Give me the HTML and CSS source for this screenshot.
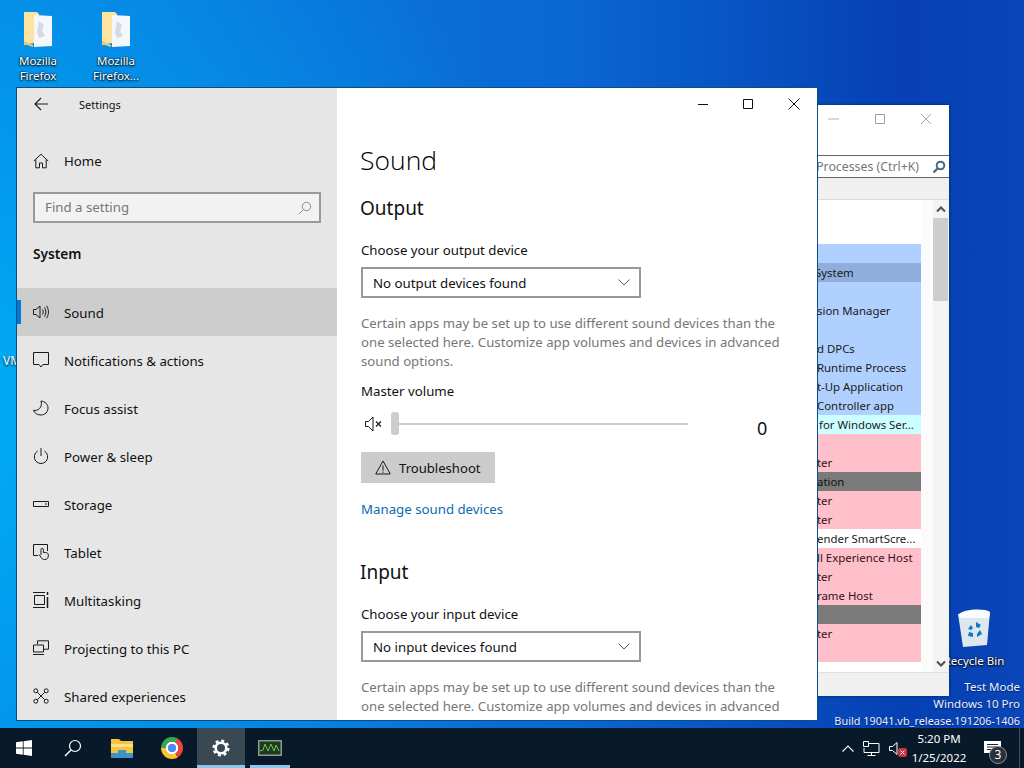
FILE: index.html
```html
<!DOCTYPE html>
<html lang="en">
<head>
<meta charset="utf-8">
<title>Settings - Sound</title>
<link rel="stylesheet" href="styles.css">
</head>
<body>
<div class="desktop">
  <div class="desk-icon folder-one">
    <svg width="32" height="38" viewBox="0 0 32 38"><path d="M2 2h13l2 2v28L2 35z" fill="#fde3a0"/><path d="M2 31l9 4v2l-9-3z" fill="#ecc873"/><path d="M12 5l18 1v30l-18 1z" fill="#f4f7fb"/><path d="M17 11l5 4-2 6 3 5-6 2-2-6z" fill="#d5dbe2"/></svg>
    <span>Mozilla<br>Firefox</span>
  </div>
  <div class="desk-icon folder-two">
    <svg width="32" height="38" viewBox="0 0 32 38"><path d="M2 2h13l2 2v28L2 35z" fill="#fde3a0"/><path d="M2 31l9 4v2l-9-3z" fill="#ecc873"/><path d="M12 5l18 1v30l-18 1z" fill="#f4f7fb"/><path d="M17 11l5 4-2 6 3 5-6 2-2-6z" fill="#d5dbe2"/></svg>
    <span>Mozilla<br>Firefox...</span>
  </div>
  <span class="desk-vm">VM</span>
  <div class="desk-icon recycle">
    <svg width="38" height="40" viewBox="0 0 38 40"><path d="M3 6l32-2-3 33-24 2z" fill="#dfe7ee"/><path d="M3 7c5-6 26-7 32-3l-1 6H5z" fill="#fafcfe"/><path d="M21 14l5 3-2 3-3-1zM13 21l3-4 2 3-2 2zM18 29l-5-1 1-4 4 1zM25 22l2 4-5 3v-3z" fill="#1178c8"/></svg>
    <span>Recycle Bin</span>
  </div>
  <div class="watermark">
    <span>Test Mode</span>
    <span>Windows 10 Pro</span>
    <span class="wm-build">Build 19041.vb_release.191206-1406</span>
  </div>

  <section class="tm">
    <div class="tm-title">
      <svg width="12" height="12" viewBox="0 0 12 12"><path d="M0 6h11" stroke="#b4b4b4"/></svg>
      <svg width="12" height="12" viewBox="0 0 12 12"><path d="M1.500 1.500h9v9h-9z" fill="none" stroke="#a0a0a0"/></svg>
      <svg width="12" height="12" viewBox="0 0 12 12"><path d="M1 1l10 10M11 1L1 11" stroke="#a8a8a8"/></svg>
    </div>
    <div class="tm-search">
      <span>Search Processes (Ctrl+K)</span>
      <svg width="14" height="14" viewBox="0 0 14 14"><circle cx="8.500" cy="5.500" r="3.800" fill="none" stroke="#4d6b88" stroke-width="2"/><path d="M6 8l-4.500 4.500" stroke="#4d6b88" stroke-width="2.400"/></svg>
    </div>
    <div class="tm-toolbar"></div>
    <div class="tm-body">
      <div class="tm-list">
        <div class="tm-blank"></div>
        <div class="row blue"></div>
        <div class="row blue-dark sys">System</div>
        <div class="row blue"></div>
        <div class="row blue">sion Manager</div>
        <div class="row blue"></div>
        <div class="row blue">d DPCs</div>
        <div class="row blue">Runtime Process</div>
        <div class="row blue">t-Up Application</div>
        <div class="row blue">Controller app</div>
        <div class="row cyan">for Windows Ser...</div>
        <div class="row pink"></div>
        <div class="row pink">ter</div>
        <div class="row grey">ation</div>
        <div class="row pink">ter</div>
        <div class="row pink">ter</div>
        <div class="row plain">ender SmartScre...</div>
        <div class="row pink">ll Experience Host</div>
        <div class="row pink">ter</div>
        <div class="row pink">rame Host</div>
        <div class="row grey"></div>
        <div class="row pink">ter</div>
        <div class="row pink"></div>
      </div>
      <div class="tm-scroll">
        <svg class="tm-arrow" width="10" height="7" viewBox="0 0 10 7"><path d="M1 5.500l4-4 4 4" fill="none" stroke="#505050" stroke-width="2"/></svg>
        <div class="tm-thumb"></div>
        <svg class="tm-arrow tm-arrow-down" width="10" height="7" viewBox="0 0 10 7"><path d="M1 1.500l4 4 4-4" fill="none" stroke="#505050" stroke-width="2"/></svg>
      </div>
    </div>
    <div class="tm-status"></div>
  </section>

  <section class="settings">
    <aside class="side">
      <div class="side-head">
        <svg class="back" width="16" height="16" viewBox="0 0 16 16"><path d="M15 8H2M8 2L2 8l6 6" fill="none" stroke="#1a1a1a" stroke-width="1.100"/></svg>
        <span>Settings</span>
      </div>
      <div class="nav-item home">
        <svg width="16" height="16" viewBox="0 0 16 16"><path d="M.8 8L8 1.200 15.200 8M2.800 6.500v8.300h3.700V10h3v4.800h3.700V6.500" fill="none" stroke="#1a1a1a"/></svg>
        <span>Home</span>
      </div>
      <div class="find">
        <span>Find a setting</span>
        <svg width="14" height="14" viewBox="0 0 14 14"><circle cx="8.500" cy="5.500" r="4.200" fill="none" stroke="#8a8a8a"/><path d="M5.500 8.500L1 13" stroke="#8a8a8a"/></svg>
      </div>
      <h2 class="side-title">System</h2>
      <nav class="nav">
        <div class="nav-item active">
          <svg width="16" height="16" viewBox="0 0 16 16"><path d="M.5 5.500h2.500L7 2v12L3 10.500H.5zM9.500 5.500c1 1.500 1 3.500 0 5M11.500 3.500c1.800 2.700 1.800 6.300 0 9M13.500 1.800c2.600 3.800 2.600 8.600 0 12.400" fill="none" stroke="#1a1a1a"/></svg>
          <span>Sound</span>
        </div>
        <div class="nav-item">
          <svg width="16" height="16" viewBox="0 0 16 16"><path d="M.5 .5h15v12H10l-2 2.500-2-2.500H.5z" fill="none" stroke="#1a1a1a"/></svg>
          <span>Notifications &amp; actions</span>
        </div>
        <div class="nav-item">
          <svg width="16" height="16" viewBox="0 0 16 16"><path d="M8 1c4 .5 7 3.200 7 7 0 4-3 7-7 7-3.500 0-6.500-1.800-7.500-4.700C4.500 11.500 10 7.500 8 1z" fill="none" stroke="#1a1a1a"/></svg>
          <span>Focus assist</span>
        </div>
        <div class="nav-item">
          <svg width="16" height="16" viewBox="0 0 16 16"><path d="M4.700 3a6.700 6.700 0 1 0 6.600 0M8 0v8" fill="none" stroke="#1a1a1a"/></svg>
          <span>Power &amp; sleep</span>
        </div>
        <div class="nav-item">
          <svg width="16" height="16" viewBox="0 0 16 16"><path d="M.5 5.500h15v5H.5z" fill="none" stroke="#1a1a1a"/><path d="M12 8h2" stroke="#1a1a1a"/></svg>
          <span>Storage</span>
        </div>
        <div class="nav-item">
          <svg width="16" height="16" viewBox="0 0 16 16"><path d="M5 11.500H.5V.5h14v6.500" fill="none" stroke="#1a1a1a"/><path d="M8 11V5.500a1.200 1.200 0 0 1 2.400 0V8.500h2c1.800 0 3 1 3 2.800 0 2.800-1.500 4.200-3.700 4.200-2 0-3-.8-3.700-2.200L6 10.500" fill="none" stroke="#1a1a1a"/></svg>
          <span>Tablet</span>
        </div>
        <div class="nav-item">
          <svg width="16" height="16" viewBox="0 0 16 16"><path d="M0 .5h12M0 15.500h12M1.500 3.500h10v9h-10z" fill="none" stroke="#1a1a1a"/><path d="M14.500 0v3M14.500 5v11" stroke="#1a1a1a" stroke-width="1.500"/></svg>
          <span>Multitasking</span>
        </div>
        <div class="nav-item">
          <svg width="16" height="16" viewBox="0 0 16 16"><path d="M4.500 4V.8h11v8.400H11M.5 5h10v7H.5zM0 14.500h11" fill="none" stroke="#1a1a1a"/></svg>
          <span>Projecting to this PC</span>
        </div>
        <div class="nav-item">
          <svg width="16" height="16" viewBox="0 0 16 16"><circle cx="2.800" cy="2.800" r="2" fill="none" stroke="#1a1a1a"/><circle cx="13.200" cy="2.800" r="2" fill="none" stroke="#1a1a1a"/><circle cx="2.800" cy="13.200" r="2" fill="none" stroke="#1a1a1a"/><circle cx="13.200" cy="13.200" r="2" fill="none" stroke="#1a1a1a"/><path d="M4.300 4.300l7.400 7.400M11.700 4.300l-7.400 7.400" stroke="#1a1a1a"/></svg>
          <span>Shared experiences</span>
        </div>
      </nav>
    </aside>
    <main class="main">
      <h1>Sound</h1>
      <h3 class="section-title">Output</h3>
      <p class="label">Choose your output device</p>
      <div class="select"><span>No output devices found</span>
        <svg width="12" height="7" viewBox="0 0 12 7"><path d="M.5 .5L6 6l5.500-5.500" fill="none" stroke="#5a5a5a"/></svg>
      </div>
      <p class="hint">Certain apps may be set up to use different sound devices than the one selected here. Customize app volumes and devices in advanced sound options.</p>
      <p class="label label-volume">Master volume</p>
      <div class="volume">
        <svg width="19" height="16" viewBox="0 0 19 16"><path d="M.5 5.500h3L8 1v14l-4.500-4.500h-3z" fill="none" stroke="#1a1a1a"/><path d="M11 5.500l5 5M16 5.500l-5 5" stroke="#1a1a1a" stroke-width="1.200"/></svg>
        <div class="slider"><i class="slider-thumb"></i><i class="slider-track"></i></div>
        <span class="volume-value">0</span>
      </div>
      <button class="troubleshoot" type="button">
        <svg width="16" height="15" viewBox="0 0 16 15"><path d="M8 1l7.300 13H.7z" fill="none" stroke="#1a1a1a"/><path d="M8 5.500v5M8 11.500v1.300" stroke="#1a1a1a"/></svg>
        <span>Troubleshoot</span>
      </button>
      <a class="link" href="#">Manage sound devices</a>
      <h3 class="section-title input-title">Input</h3>
      <p class="label">Choose your input device</p>
      <div class="select"><span>No input devices found</span>
        <svg width="12" height="7" viewBox="0 0 12 7"><path d="M.5 .5L6 6l5.500-5.500" fill="none" stroke="#5a5a5a"/></svg>
      </div>
      <p class="hint">Certain apps may be set up to use different sound devices than the one selected here. Customize app volumes and devices in advanced sound options.</p>
    </main>
    <div class="caption">
      <svg width="10" height="10" viewBox="0 0 10 10"><path d="M0 5.500h10" stroke="#111"/></svg>
      <svg width="10" height="10" viewBox="0 0 10 10"><path d="M.5 .5h9v9h-9z" fill="none" stroke="#111"/></svg>
      <svg width="12" height="12" viewBox="0 0 12 12"><path d="M.5 .5l11 11M11.500 .5l-11 11" stroke="#111"/></svg>
    </div>
  </section>

  <footer class="taskbar">
    <div class="task start">
      <svg width="16" height="16" viewBox="0 0 16 16"><path d="M0 2.300l6.800-1v6.300H0zM7.600 1.200L16 0v7.600H7.600zM0 8.400h6.800v6.300l-6.800-1zM7.600 8.400H16V16l-8.400-1.200z" fill="#fff"/></svg>
    </div>
    <div class="task task-search">
      <svg width="18" height="18" viewBox="0 0 18 18"><circle cx="11" cy="7" r="5.500" fill="none" stroke="#fff" stroke-width="1.200"/><path d="M7 11l-6 6" stroke="#fff" stroke-width="1.400"/></svg>
    </div>
    <div class="task">
      <svg width="22" height="20" viewBox="0 0 22 20"><path d="M0 1h8l2 2h12v17H0z" fill="#f5c542"/><path d="M0 6h22v3H0z" fill="#fde08a"/><path d="M0 15h7v-3h8v3h7v5H0z" fill="#3f93c9"/></svg>
    </div>
    <div class="task">
      <i class="chrome"></i>
    </div>
    <div class="task task-on">
      <svg width="18" height="18" viewBox="0 0 18 18"><circle cx="9" cy="9" r="5.300" fill="none" stroke="#fff" stroke-width="2.600"/><circle cx="9" cy="9" r="7.400" fill="none" stroke="#fff" stroke-width="2.400" stroke-dasharray="3 2.810"/></svg>
    </div>
    <div class="task task-run">
      <svg width="24" height="16" viewBox="0 0 24 16"><path d="M0 0h24v16H0z" fill="#8f9c92"/><path d="M1.500 1.500h21v13h-21z" fill="#1d3a1f"/><path d="M2 11l3-1 2-6 3 7 3-7 3 7 2-6 3 6" fill="none" stroke="#6fc24a"/></svg>
    </div>
    <div class="tray">
      <svg class="tray-up" width="12" height="7" viewBox="0 0 12 7"><path d="M.5 6.500L6 1l5.500 5.500" fill="none" stroke="#fff" stroke-width="1.100"/></svg>
      <svg width="17" height="15" viewBox="0 0 17 15"><path d="M5 2.500h11v9H1V7M8.500 11.500v3M4.500 14.500h8" fill="none" stroke="#fff"/><path d="M.5 .5h5v5h-5z" fill="none" stroke="#fff"/></svg>
      <svg class="tray-sound" width="19" height="16" viewBox="0 0 19 16"><path d="M.5 4.500h3L8 .5v12l-4.500-4h-3z" fill="none" stroke="#fff"/><rect x="9" y="6" width="9" height="9" rx="2" fill="#c9323a"/><path d="M11.500 8.500l4 4M15.500 8.500l-4 4" stroke="#fff"/></svg>
      <div class="clock"><span>5:20 PM</span><span>1/25/2022</span></div>
      <div class="notify">
        <svg width="17" height="15" viewBox="0 0 17 15"><path d="M0 0h17v12H11l-3 3v-3H0z" fill="#fff"/><path d="M3 3.500h11M3 6h11M3 8.500h7" stroke="#1a2630"/></svg>
        <b class="badge">3</b>
      </div>
      <i class="show-desktop"></i>
    </div>
  </footer>
</div>
</body>
</html>
```
FILE: styles.css
```css
* { box-sizing: border-box; }
html, body { margin: 0; padding: 0; }
body {
  font-family: "Noto Sans", "Open Sans", sans-serif;
  color: #111;
  overflow: hidden;
}
.desktop {
  position: relative;
  width: 1024px;
  height: 768px;
  overflow: hidden;
  background:
    radial-gradient(ellipse 620px 700px at -60px 420px, #00aef5 0%, rgba(0,160,240,.85) 35%, rgba(0,120,225,0) 100%),
    linear-gradient(90deg, #0a7fe0 0%, #0a68d4 55%, #0640b4 88%, #0a46b8 100%);
}

/* desktop items */
.desk-icon {
  position: absolute;
  display: flex;
  flex-direction: column;
  align-items: center;
  color: #fff;
  font-size: 11.500px;
  line-height: 15px;
  text-align: center;
  text-shadow: 0 1px 2px #000, 0 0 2px #000;
}
.folder-one { left: 7px; top: 10px; width: 62px; }
.folder-two { left: 85px; top: 10px; width: 62px; }
.desk-icon span { margin-top: 5px; }
.recycle { left: 935px; top: 608px; width: 78px; }
.recycle span { margin-top: 5px; }
.desk-vm {
  position: absolute;
  left: 3px;
  top: 353px;
  color: #fff;
  font-size: 12px;
  line-height: 16px;
  text-shadow: 0 1px 2px #000;
}
.watermark {
  position: absolute;
  right: 4px;
  top: 678px;
  display: flex;
  flex-direction: column;
  align-items: flex-end;
  color: #e9f2ff;
  font-size: 11.500px;
  line-height: 17px;
  text-shadow: 0 1px 1px rgba(0,0,40,.6);
}
.wm-build { font-size: 10.900px; }

/* background process window */
.tm {
  position: absolute;
  left: 760px;
  top: 105px;
  width: 189px;
  height: 591px;
  display: flex;
  flex-direction: column;
  background: #fff;
  box-shadow: 0 0 3px rgba(0,0,0,.5);
  font-size: 11.400px;
}
.tm-title {
  height: 50px;
  padding: 8px 17px 0 0;
  display: flex;
  justify-content: flex-end;
  gap: 34px;
}
.tm-search {
  height: 23px;
  border: 1px solid #5a6670;
  border-right: 0;
  display: flex;
  align-items: center;
  justify-content: flex-end;
  gap: 13px;
  padding-right: 3px;
  color: #777;
  font-size: 12.300px;
  white-space: nowrap;
}
.tm-toolbar { height: 22px; background: #f0f0f0; border-bottom: 1px solid #dcdcdc; }
.tm-body { flex: 1; display: flex; min-height: 0; }
.tm-list { flex: 1; overflow: hidden; line-height: 19px; }
.tm-blank { height: 44px; background: #fff; }
.row { height: 19px; padding-left: 57px; white-space: nowrap; color: #1a1a1a; overflow: hidden; }
.sys { padding-left: 55px; }
.blue { background: #b0d0ff; }
.blue-dark { background: #90aedc; }
.cyan { background: #ccffff; padding-left: 59px; }
.pink { background: #ffc0cb; color: #33101a; }
.grey { background: #7a7a7a; color: #111; }
.plain { background: #fff; }
.tm-scroll {
  position: relative;
  width: 28px;
  flex: none;
  background: #f3f3f3;
  border-left: 12px solid #fbfbfb;
}
.tm-arrow { position: absolute; left: 3px; top: 6px; }
.tm-arrow-down { top: auto; bottom: 5px; }
.tm-thumb { position: absolute; left: 0; top: 18px; width: 15px; height: 83px; background: #cdcdcd; }
.tm-status { height: 24px; background: #f0f0f0; border-top: 1px solid #e0e0e0; }

/* settings window */
.settings {
  position: absolute;
  left: 16px;
  top: 87px;
  width: 802px;
  height: 634px;
  display: flex;
  border: 1px solid #0b4f80;
  background: #fff;
  overflow: hidden;
}
.side {
  width: 320px;
  flex: none;
  background: #e6e6e6;
  font-size: 13.250px;
}
.side-head {
  height: 32px;
  display: flex;
  align-items: center;
  font-size: 11px;
  padding-left: 16px;
}
.side-head .back { margin-right: 30px; }
.nav-item {
  position: relative;
  height: 48px;
  display: flex;
  align-items: center;
  gap: 15px;
  padding-left: 16px;
  white-space: nowrap;
}
.nav .nav-item span { padding-top: 2px; }
.home { margin-top: 17px; }
.find {
  margin: 7px 16px 0;
  height: 31px;
  border: 2px solid #999;
  background: #f2f2f2;
  display: flex;
  align-items: center;
  justify-content: space-between;
  padding: 0 7px 0 10px;
  color: #777;
}
.find span { padding-bottom: 2px; }
.side-title {
  margin: 21px 0 0 16px;
  font-size: 13.700px;
  line-height: 20px;
  font-weight: 600;
}
.nav { margin-top: 24px; }
.active { background: #cdcdcd; }
.active::before {
  content: "";
  position: absolute;
  left: 0;
  top: 12px;
  width: 4px;
  height: 24px;
  background: #0078d7;
}
.main {
  flex: 1;
  padding: 0 23px;
  min-width: 0;
}
h1 {
  margin: 53px 0 0;
  font-size: 26.500px;
  line-height: 38px;
  font-weight: 300;
  color: #000;
  font-family: "Open Sans", "Noto Sans", sans-serif;
}
.section-title {
  margin: 16px 0 0;
  font-size: 19px;
  line-height: 26px;
  font-weight: 400;
}
.label {
  margin: 19px 0 0 1px;
  font-size: 13.250px;
  line-height: 20px;
}
.select {
  margin: 7px 0 0 1px;
  width: 280px;
  height: 31px;
  border: 2px solid #999;
  display: flex;
  align-items: center;
  justify-content: space-between;
  padding: 0 9px 0 10px;
  font-size: 13.250px;
}
.hint {
  margin: 16px 0 0 1px;
  width: 430px;
  color: #767676;
  font-size: 13.200px;
  line-height: 19px;
}
.label-volume { margin-top: 10px; }
.volume {
  margin: 11px 0 0 5px;
  height: 23px;
  display: flex;
  align-items: center;
}
.slider {
  margin-left: 7px;
  width: 297px;
  display: flex;
  align-items: center;
}
.slider-thumb { width: 8px; height: 23px; border-radius: 3px; background: #ccc; flex: none; }
.slider-track { flex: 1; height: 2px; background: #ccc; }
.volume-value { margin: 8px 0 0 69px; font-size: 18px; }
.troubleshoot {
  margin: 17px 0 0 1px;
  width: 134px;
  height: 31px;
  border: 0;
  padding: 0 0 0 14px;
  background: #ccc;
  display: flex;
  align-items: center;
  gap: 8px;
  color: #111;
  font: inherit;
  font-size: 13.100px;
}
.link {
  display: block;
  margin: 16px 0 0 1px;
  color: #0a6cb0;
  text-decoration: none;
  font-size: 13.250px;
  line-height: 20px;
}
.input-title { margin-top: 40px; }
.caption {
  position: absolute;
  right: 17px;
  top: 10px;
  display: flex;
  align-items: center;
  gap: 35px;
}

/* taskbar */
.taskbar {
  position: absolute;
  left: 0;
  right: 0;
  bottom: 0;
  height: 40px;
  background: #08192a;
  display: flex;
}
.task {
  position: relative;
  width: 50px;
  display: flex;
  align-items: center;
  justify-content: center;
}
.start { width: 48px; }
.task-search { width: 49px; }
.task-on { width: 48px; background: #3a4853; }
.task-on::after, .task-run::after {
  content: "";
  position: absolute;
  left: 0;
  right: 0;
  bottom: 0;
  height: 3px;
  background: #8cc6ee;
}
.task-run { margin-left: 5px; width: 40px; }
.chrome {
  width: 22px;
  height: 22px;
  border-radius: 50%;
  background:
    radial-gradient(circle, #4a8cf0 0 4px, #fff 4.500px 6px, transparent 6.500px),
    conic-gradient(from 30deg, #e8483a 0 120deg, #f7c52d 120deg 240deg, #3aa655 240deg 360deg);
}
.tray {
  margin-left: auto;
  display: flex;
  align-items: center;
  color: #fff;
}
.tray-up { margin-right: 9px; }
.tray-sound { margin-left: 9px; margin-top: 3px; }
.clock {
  width: 62px;
  display: flex;
  flex-direction: column;
  align-items: center;
  font-size: 11.500px;
  line-height: 19px;
  white-space: nowrap;
}
.notify {
  position: relative;
  width: 49px;
  display: flex;
  justify-content: center;
  padding-right: 5px;
}
.badge {
  position: absolute;
  left: 19px;
  top: 5px;
  width: 18px;
  height: 18px;
  border-radius: 50%;
  border: 1px solid #8a8f94;
  background: #2a3038;
  font-size: 12px;
  font-weight: 400;
  line-height: 16px;
  text-align: center;
}
.show-desktop { width: 1px; height: 40px; background: #45525c; margin-right: 4px; }
```
